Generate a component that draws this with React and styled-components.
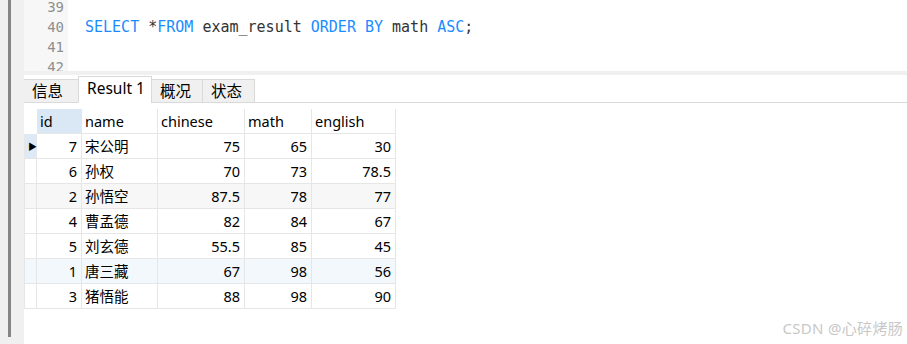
import styled, { createGlobalStyle } from 'styled-components'

const GlobalStyle = createGlobalStyle`
  html, body {
    margin: 0;
    padding: 0;
    background: #ffffff;
  }
  body {
    font-family: "Noto Sans", "Noto Sans CJK SC", sans-serif;
  }
`

const Page = styled.div`
  position: relative;
  display: flex;
  width: 907px;
  height: 344px;
  overflow: hidden;
  background: #ffffff;
`

const SideStrip = styled.div`
  width: 24px;
  flex-shrink: 0;
  background: #f0f0f0;
  display: flex;
  padding-left: 8px;
  box-sizing: border-box;
`

const SideBar = styled.div`
  width: 3px;
  height: 337px;
  background: #858585;
`

const Main = styled.div`
  flex: 1;
  display: flex;
  flex-direction: column;
`

const Editor = styled.div`
  height: 71px;
  overflow: hidden;
  display: flex;
`

const Gutter = styled.div`
  width: 44px;
  background: #f7f7f7;
  margin-top: -3px;
  height: 80px;
`

const LineNo = styled.div`
  height: 20px;
  line-height: 20px;
  text-align: right;
  padding-right: 4px;
  font-family: "DejaVu Sans Mono", monospace;
  font-size: 14px;
  color: #8f8f8f;
`

const Code = styled.div`
  margin-top: -3px;
  padding-left: 17px;
`

const CodeLine = styled.div`
  height: 20px;
  line-height: 20px;
  font-family: "DejaVu Sans Mono", monospace;
  font-size: 15px;
  color: #333333;
  white-space: pre;
`

const Kw = styled.span`
  color: #1a8cff;
`

const Separator = styled.div`
  height: 4px;
  background: #f0f0f0;
`

const TabBar = styled.div`
  height: 27px;
  display: flex;
  align-items: flex-end;
  border-bottom: 1px solid #dadada;
`

const Tab = styled.div`
  box-sizing: border-box;
  height: ${p => (p.$active ? '27px' : '24px')};
  width: ${p => p.$w}px;
  margin-bottom: -1px;
  padding-left: 8px;
  padding-bottom: ${p => (p.$active ? '4px' : '2px')};
  display: flex;
  align-items: center;
  font-size: 15.5px;
  color: #000;
  background: ${p => (p.$active ? '#ffffff' : '#f0f0f0')};
  border: 1px solid #d9d9d9;
  border-bottom: ${p => (p.$active ? '1px solid #ffffff' : '1px solid #dadada')};
  border-left: ${p => (p.$first ? 'none' : '1px solid #d9d9d9')};
  & + & {
    margin-left: -1px;
  }
`

const Grid = styled.div`
  margin-top: 6px;
  display: grid;
  grid-template-columns: 13px 45px 76px 87px 67px 84px;
  grid-auto-rows: 25px;
  width: max-content;
`

const HeadCell = styled.div`
  box-sizing: border-box;
  padding-left: 3px;
  padding-bottom: 1px;
  display: flex;
  align-items: center;
  font-size: 14.5px;
  color: #000;
  background: ${p => (p.$selected ? '#dae8f6' : '#ffffff')};
  border-right: 1px solid #e6e6e6;
  border-bottom: 1px solid #e6e6e6;
`

const Corner = styled.div``

const Indicator = styled.div`
  box-sizing: border-box;
  display: flex;
  align-items: center;
  padding-left: 3px;
  border-left: 1px solid #e6e6e6;
  border-right: 1px solid #e6e6e6;
  border-bottom: 1px solid #e6e6e6;
  background: ${p => (p.$current ? '#dde9f6' : p.$bg)};
  font-size: 9px;
  color: #000;
`

const Cell = styled.div`
  box-sizing: border-box;
  display: flex;
  align-items: center;
  justify-content: ${p => (p.$num ? 'flex-end' : 'flex-start')};
  padding: ${p => (p.$num ? '0 4px 1px 0' : '0 0 1px 3px')};
  font-size: 14.5px;
  color: #000;
  background: ${p => p.$bg};
  border-right: 1px solid #e6e6e6;
  border-bottom: 1px solid #e6e6e6;
  white-space: nowrap;
`

const Watermark = styled.div`
  position: absolute;
  right: 4px;
  bottom: 6px;
  font-size: 15px;
  color: #c8c8c8;
  letter-spacing: 0.3px;
`

const rows = [
  [7, '宋公明', 75, 65, 30],
  [6, '孙权', 70, 73, 78.5],
  [2, '孙悟空', 87.5, 78, 77],
  [4, '曹孟德', 82, 84, 67],
  [5, '刘玄德', 55.5, 85, 45],
  [1, '唐三藏', 67, 98, 56],
  [3, '猪悟能', 88, 98, 90],
]

const rowBg = ['#ffffff', '#ffffff', '#f7f7f7', '#ffffff', '#ffffff', '#f3f8fd', '#ffffff']

export default function App() {
  return (
    <>
      <GlobalStyle />
      <Page>
        <SideStrip>
          <SideBar />
        </SideStrip>
        <Main>
          <Editor>
            <Gutter>
              <LineNo>39</LineNo>
              <LineNo>40</LineNo>
              <LineNo>41</LineNo>
              <LineNo>42</LineNo>
            </Gutter>
            <Code>
              <CodeLine> </CodeLine>
              <CodeLine>
                <Kw>SELECT</Kw> *<Kw>FROM</Kw> exam_result <Kw>ORDER</Kw> <Kw>BY</Kw> math <Kw>ASC</Kw>;
              </CodeLine>
            </Code>
          </Editor>
          <Separator />
          <TabBar>
            <Tab $w={55} $first>信息</Tab>
            <Tab $w={74} $active>Result 1</Tab>
            <Tab $w={52}>概况</Tab>
            <Tab $w={53}>状态</Tab>
          </TabBar>
          <Grid>
            <Corner />
            <HeadCell $selected>id</HeadCell>
            <HeadCell>name</HeadCell>
            <HeadCell>chinese</HeadCell>
            <HeadCell>math</HeadCell>
            <HeadCell>english</HeadCell>
            {rows.map((r, i) => [
              <Indicator key={`i${i}`} $current={i === 0} $bg={rowBg[i]}>
                {i === 0 ? '▶' : ''}
              </Indicator>,
              <Cell key={`a${i}`} $num $bg={rowBg[i]}>{r[0]}</Cell>,
              <Cell key={`b${i}`} $bg={rowBg[i]}>{r[1]}</Cell>,
              <Cell key={`c${i}`} $num $bg={rowBg[i]}>{r[2]}</Cell>,
              <Cell key={`d${i}`} $num $bg={rowBg[i]}>{r[3]}</Cell>,
              <Cell key={`e${i}`} $num $bg={rowBg[i]}>{r[4]}</Cell>,
            ])}
          </Grid>
        </Main>
        <Watermark>CSDN @心碎烤肠</Watermark>
      </Page>
    </>
  )
}
